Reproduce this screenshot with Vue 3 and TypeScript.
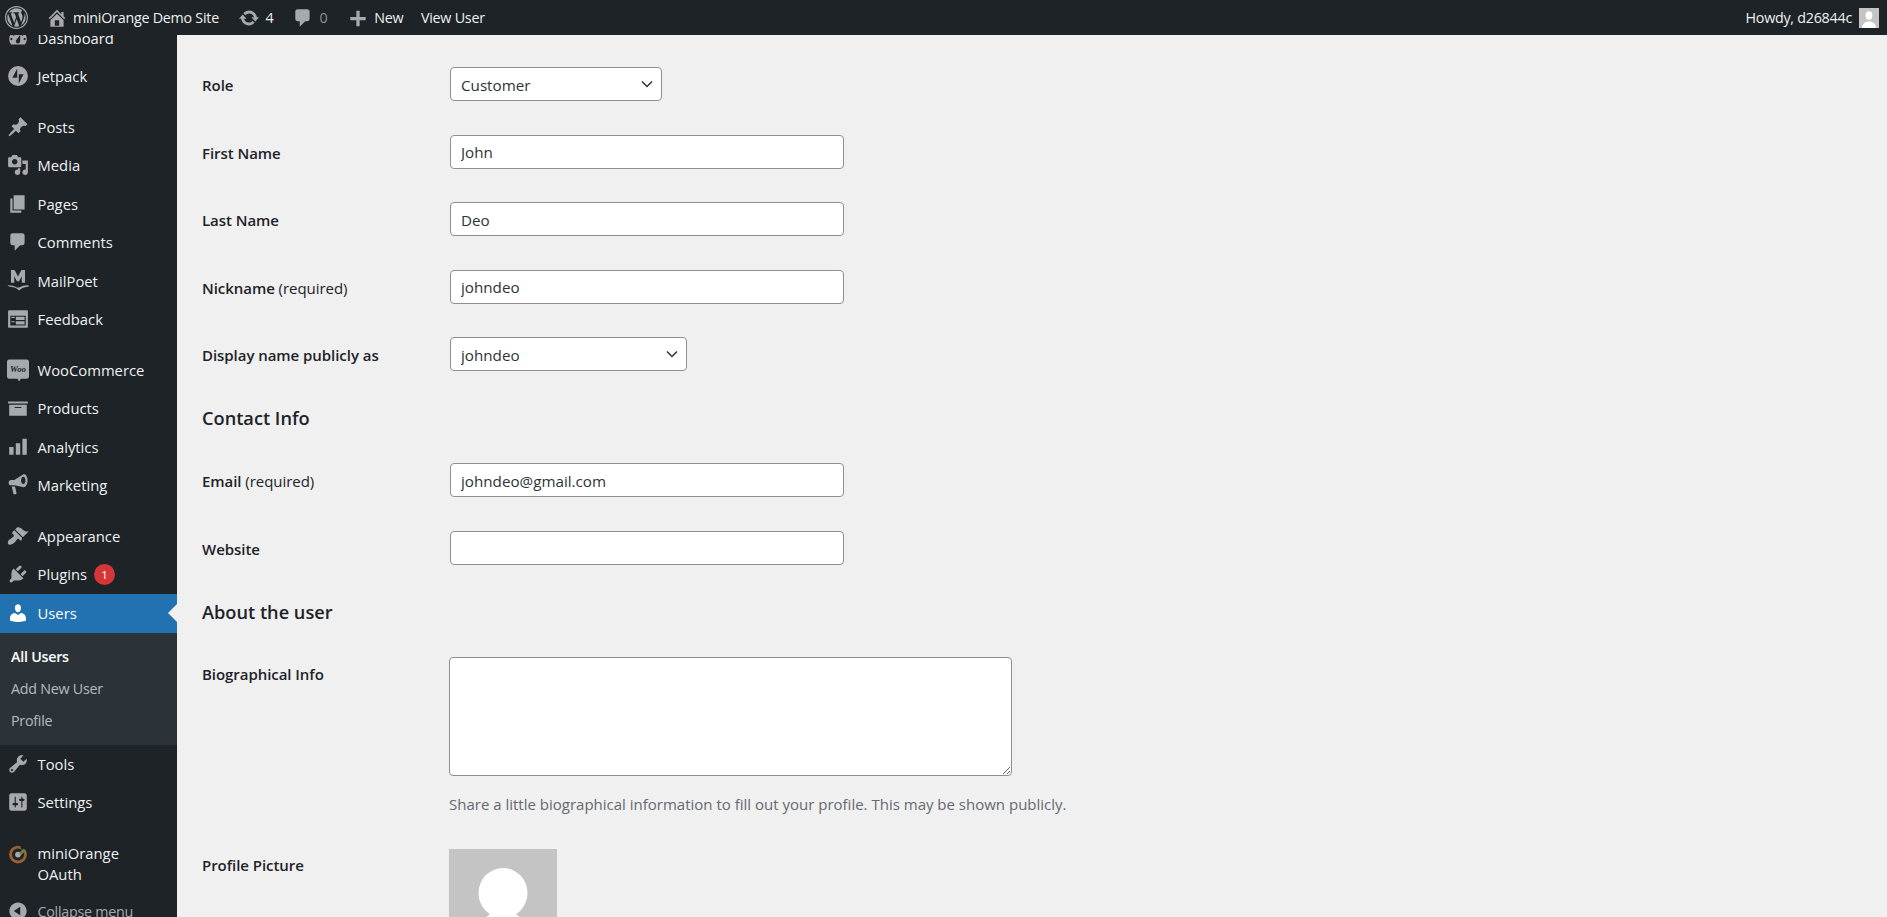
<script setup lang="ts">
interface MenuItem {
  label: string
  icon: string
  gapBefore?: boolean
  active?: boolean
  badge?: string
}

const paths: Record<string, string> = {
  dashboard: 'M3.76 16h12.48c1.1-1.37 1.76-3.11 1.76-5 0-4.42-3.58-8-8-8s-8 3.58-8 8c0 1.89.66 3.63 1.76 5zM10 4c.55 0 1 .45 1 1s-.45 1-1 1-1-.45-1-1 .45-1 1-1zM6 6c.55 0 1 .45 1 1s-.45 1-1 1-1-.45-1-1 .45-1 1-1zm8 0c.55 0 1 .45 1 1s-.45 1-1 1-1-.45-1-1 .45-1 1-1zm-5.37 5.55L12 7v6c0 1.1-.9 2-2 2s-2-.9-2-2c0-.57.24-1.08.63-1.45zM4 10c.55 0 1 .45 1 1s-.45 1-1 1-1-.45-1-1 .45-1 1-1zm12 0c.55 0 1 .45 1 1s-.45 1-1 1-1-.45-1-1 .45-1 1-1z',
  jetpack: 'M10 1a9 9 0 1 0 0 18 9 9 0 0 0 0-18zM9.3 11.6H4.9l4.4-8.5zM10.7 16.9V8.400h4.400z',
  posts: 'M10.44 3.02l1.82-1.82 6.36 6.35-1.83 1.82c-1.05-.68-2.48-.57-3.41.36l-.75.75c-.92.93-1.04 2.35-.35 3.41l-1.83 1.82-2.41-2.41-2.8 2.79c-.42.42-3.38 2.71-3.8 2.29s1.86-3.39 2.28-3.81l2.79-2.79L4.1 9.36l1.83-1.82c1.05.69 2.48.57 3.4-.36l.75-.75c.93-.92 1.05-2.35.36-3.41z',
  media: 'M13 11V4c0-.55-.45-1-1-1h-1.67L9 1H5L3.67 3H2c-.55 0-1 .45-1 1v7c0 .55.45 1 1 1h10c.55 0 1-.45 1-1zM7 4.500c1.380 0 2.500 1.120 2.500 2.500S8.380 9.500 7 9.500 4.500 8.380 4.500 7 5.620 4.500 7 4.500zM14 6h5v10.500c0 1.380-1.120 2.500-2.500 2.500S14 17.880 14 16.500s1.120-2.500 2.500-2.500c.17 0 .34.02.5.05V9h-3V6zm-4 8.050V13h2v3.500c0 1.380-1.120 2.500-2.500 2.500S7 17.880 7 16.500 8.120 14 9.500 14c.17 0 .34.02.5.05z',
  pages: 'M6 15V2h10v13H6zm-1 1h8v2H3V5h2v11z',
  comments: 'M5 2h9c1.100 0 2 .9 2 2v7c0 1.100-.9 2-2 2h-2l-5 5v-5H5c-1.100 0-2-.9-2-2V4c0-1.100.9-2 2-2z',
  mailpoet: 'M3.600 0h3.300L10 5.800 13.100 0h3.300v11.500h-3V5.600l-2.400 4.700H9L6.600 5.600v5.900h-3zM.4 13.800l1 .1c2.500.2 5.200.5 7.600 2.100h2c2.400-1.600 5.100-1.900 7.600-2.100l1-.1v1.500c-3 .3-5.500.6-7.500 2.500-.4.4-.6.500-1.100.5s-.7-.1-1.100-.5c-2-1.900-4.500-2.200-7.500-2.500z',
  feedback: 'M2 2h16c.55 0 1 .45 1 1v14c0 .55-.45 1-1 1H2c-.55 0-1-.45-1-1V3c0-.55.45-1 1-1zm15 14V7H3v9h14zM4 8v1h3V8H4zm4 0v3h8V8H8zm-4 4v1h3v-1H4zm4 0v3h8v-3H8z',
  woo: 'M2 .5h16c1.100 0 2 .9 2 2V16c0 1.100-.9 2-2 2h-5.500L11 20.500 9.500 18H2c-1.100 0-2-.9-2-2V2.500C0 1.400.9.500 2 .5z',
  products: 'M19 4v2H1V4h18zM2 7h16v10H2V7zm11 3V9H7v1h6z',
  analytics: 'M2 10h4v7H2zM8 6.500h4V17H8zM14 2.500h4V17h-4z',
  marketing: 'M18.700 5.800c0 3.200-1.500 5.900-3.400 6.200L6.700 10.300H3.600c-1.200 0-2.100-1-2.100-2.200v-.5c0-1.200.9-2.100 2.100-2.100h3.100L15.300.1c1.900.2 3.400 2.600 3.400 5.700zM14.800 2.600c-1.100 0-2 1.400-2 3.200s.9 3.200 2 3.200 2-1.400 2-3.200-.9-3.200-2-3.200zM4.300 11.300h3l1.400 6.300c.1.400-.2.800-.6.800H6.400c-.3 0-.6-.2-.6-.5z',
  appearance: 'M14.480 11.060L7.410 3.990l1.500-1.500c.5-.56 2.300-.47 3.510.32 1.210.8 1.430 1.280 2.910 2.100 1.180.64 2.450 1.260 4.450.85zm-.71.71L6.700 4.700 4.930 6.470c-.39.39-.39 1.020 0 1.410l1.060 1.060c.39.39.39 1.030 0 1.420-.6.6-1.430 1.110-2.210 1.690-.35.26-.7.53-1.010.84C1.430 13.230 0 16.140 1.300 17.450c1.300 1.300 4.210-.12 5.550-1.460.31-.31.58-.66.84-1.010.57-.78 1.080-1.610 1.690-2.210.39-.39 1.020-.39 1.410 0l1.060 1.060c.39.39 1.020.39 1.410 0z',
  plugins: 'M13.110 4.360L9.870 7.600 8 5.730l3.240-3.240c.35-.34 1.050-.2 1.560.32.52.51.66 1.210.31 1.550zm-8 1.770l.91-1.120 9.010 9.010-1.190.84c-.71.71-2.630 1.160-3.820 1.160H6.140L4.900 17.260c-.59.59-1.540.59-2.120 0-.59-.58-.59-1.530 0-2.120l1.240-1.240v-3.880c0-1.130.4-3.190 1.090-3.890zm7.260 3.970l3.240-3.240c.34-.35 1.040-.21 1.550.31.52.51.66 1.210.31 1.550l-3.240 3.250z',
  users: 'M10 9.250c-2.270 0-2.730-3.440-2.730-3.440C7 4.020 7.820 2 9.970 2c2.160 0 2.980 2.020 2.710 3.810 0 0-.41 3.440-2.680 3.440zm0 2.570L12.720 10c2.390 0 4.520 2.330 4.520 4.530v2.490s-3.650 1.130-7.240 1.130c-3.650 0-7.240-1.130-7.240-1.130v-2.490c0-2.250 1.940-4.480 4.470-4.480z',
  tools: 'M16.680 9.770c-1.340 1.340-3.300 1.670-4.950.99l-5.410 6.520c-.99.99-2.590.99-3.580 0s-.99-2.590 0-3.570l6.520-5.420c-.68-1.650-.35-3.610.99-4.950 1.280-1.280 3.120-1.620 4.720-1.060l-2.890 2.890 2.820 2.820 2.860-2.870c.53 1.580.18 3.390-1.080 4.650zM3.810 16.210c.4.39 1.040.39 1.430 0 .4-.4.4-1.040 0-1.430-.39-.4-1.030-.4-1.430 0-.39.39-.39 1.030 0 1.430z',
  settings: 'M18 16V4c0-1.100-.9-2-2-2H4c-1.100 0-2 .9-2 2v12c0 1.100.9 2 2 2h12c1.100 0 2-.9 2-2zM8 11h1c.55 0 1 .45 1 1s-.45 1-1 1H8v1.500c0 .28-.22.5-.5.5s-.5-.22-.5-.5V13H6c-.55 0-1-.45-1-1s.45-1 1-1h1V5.500c0-.28.22-.5.5-.5s.5.22.5.5V11zm5-2h-1c-.55 0-1-.45-1-1s.45-1 1-1h1V5.500c0-.28.22-.5.5-.5s.5.22.5.5V7h1c.55 0 1 .45 1 1s-.45 1-1 1h-1v5.500c0 .28-.22.5-.5.5s-.5-.22-.5-.5V9z',
  collapse: 'M10 2.160c4.330 0 7.840 3.510 7.840 7.840s-3.510 7.840-7.840 7.840S2.160 14.330 2.160 10 5.710 2.160 10 2.160zm2 11.720V6.120L6.180 9.970z',
  wp: 'M20 10c0-5.520-4.480-10-10-10S0 4.480 0 10s4.480 10 10 10 10-4.480 10-10zM10 1.010c4.970 0 8.990 4.020 8.990 8.990s-4.020 8.990-8.990 8.990S1.010 14.970 1.010 10 5.030 1.010 10 1.010zM8.010 14.820L4.960 6.610c.49-.03 1.050-.08 1.050-.08.43-.05.38-1.010-.06-.99 0 0-1.290.1-2.130.1-.15 0-.33 0-.52-.01 1.440-2.170 3.900-3.600 6.700-3.600 2.090 0 3.990.79 5.410 2.090-.6-.08-1.450.35-1.450 1.420 0 .66.38 1.220.79 1.880.31.54.5 1.220.5 2.210 0 1.340-1.270 4.480-1.270 4.480l-2.710-7.500c.48-.03.75-.16.75-.16.43-.04.38-1.100-.05-1.070 0 0-1.300.11-2.140.11-.78 0-2.110-.11-2.110-.11-.43-.03-.48 1.060-.05 1.070l.84.08 1.120 3.040zm6.020 2.150L16.640 10s.67-1.690.39-3.810c.63 1.140.94 2.420.94 3.810 0 2.960-1.560 5.580-3.940 6.970zM2.680 6.770L6.500 17.250c-2.670-1.300-4.470-4.080-4.470-7.250 0-1.160.2-2.230.65-3.230zm7.450 4.530l2.290 6.250c-.76.27-1.570.42-2.420.42-.72 0-1.410-.11-2.060-.3z',
  home: 'M16 8.500l1.530 1.530-1.060 1.060L10 4.620l-6.470 6.470-1.060-1.060L10 2.500l4 4v-2h2v4zm-6-2.460l6 5.990V18H4v-5.970zM12 17v-5H8v5h4z',
  update: 'M10.200 3.280c3.530 0 6.430 2.610 6.920 6h2.080l-3.500 4-3.500-4h2.320c-.45-1.970-2.210-3.450-4.320-3.450-1.450 0-2.730.71-3.540 1.780L4.950 5.660C6.230 4.200 8.110 3.280 10.200 3.280zm-.4 13.440c-3.520 0-6.430-2.610-6.920-6H.8l3.500-4c1.170 1.330 2.330 2.670 3.500 4H5.480c.45 1.970 2.210 3.450 4.320 3.450 1.450 0 2.730-.71 3.540-1.780l1.710 1.950c-1.280 1.460-3.150 2.380-5.250 2.380z',
  plus: 'M17 9v3h-5.500v5.500h-3V12H3V9h5.500V3.500h3V9z',
}

const menu: MenuItem[] = [
  { label: 'Dashboard', icon: 'dashboard' },
  { label: 'Jetpack', icon: 'jetpack' },
  { label: 'Posts', icon: 'posts', gapBefore: true },
  { label: 'Media', icon: 'media' },
  { label: 'Pages', icon: 'pages' },
  { label: 'Comments', icon: 'comments' },
  { label: 'MailPoet', icon: 'mailpoet' },
  { label: 'Feedback', icon: 'feedback' },
  { label: 'WooCommerce', icon: 'woo', gapBefore: true },
  { label: 'Products', icon: 'products' },
  { label: 'Analytics', icon: 'analytics' },
  { label: 'Marketing', icon: 'marketing' },
  { label: 'Appearance', icon: 'appearance', gapBefore: true },
  { label: 'Plugins', icon: 'plugins', badge: '1' },
  { label: 'Users', icon: 'users', active: true },
]
const menuAfter: MenuItem[] = [
  { label: 'Tools', icon: 'tools' },
  { label: 'Settings', icon: 'settings' },
]
</script>

<template>
  <div class="page">
    <header class="adminbar">
      <div class="bar-left">
        <svg class="bar-wp" viewBox="0 0 20 20"><path :d="paths.wp" /></svg>
        <div class="bar-item site">
          <svg class="bar-icon" viewBox="0 0 20 20"><path :d="paths.home" /></svg>
          <span>miniOrange Demo Site</span>
        </div>
        <div class="bar-item updates">
          <svg class="bar-icon" viewBox="0 0 20 20"><path :d="paths.update" /></svg>
          <span>4</span>
        </div>
        <div class="bar-item bubbles">
          <svg class="bar-icon" viewBox="0 0 20 20"><path :d="paths.comments" /></svg>
          <span class="dim">0</span>
        </div>
        <div class="bar-item newitem">
          <svg class="bar-icon" viewBox="0 0 20 20"><path :d="paths.plus" /></svg>
          <span>New</span>
        </div>
        <div class="bar-item viewuser"><span>View User</span></div>
      </div>
      <div class="bar-right">
        <span>Howdy, d26844c</span>
        <svg class="bar-avatar" viewBox="0 0 20 20">
          <rect width="20" height="20" fill="#c4c4c4" />
          <ellipse cx="10" cy="7.500" rx="3.400" ry="4.200" fill="#fff" />
          <path d="M3 20c.3-4.500 3.500-6.500 7-6.500s6.700 2 7 6.500z" fill="#fff" />
        </svg>
      </div>
    </header>

    <div class="body-row">
      <aside class="sidebar">
        <nav class="menu">
          <div
            v-for="item in menu"
            :key="item.label"
            class="menu-item"
            :class="{ gap: item.gapBefore, active: item.active }"
          >
            <svg class="menu-icon" viewBox="0 0 20 20">
              <path :d="paths[item.icon]" />
              <text v-if="item.icon === 'woo'" x="10" y="11.500" class="woo-text">Woo</text>
            </svg>
            <span>{{ item.label }}</span>
            <span v-if="item.badge" class="badge">{{ item.badge }}</span>
            <i v-if="item.active" class="arrow"></i>
          </div>
          <div class="submenu">
            <div class="sub-item current">All Users</div>
            <div class="sub-item">Add New User</div>
            <div class="sub-item">Profile</div>
          </div>
          <div v-for="item in menuAfter" :key="item.label" class="menu-item">
            <svg class="menu-icon" viewBox="0 0 20 20"><path :d="paths[item.icon]" /></svg>
            <span>{{ item.label }}</span>
          </div>
          <div class="menu-item two-line gap">
            <svg class="menu-icon oauth" viewBox="0 0 20 20">
              <circle cx="10" cy="10.500" r="6.800" fill="none" stroke="#9a6232" stroke-width="2.600" />
              <circle cx="10" cy="10.500" r="2.600" fill="#a7aaad" />
              <path d="M12 3.500l4-1.500 1 3-3 2z" fill="#1d2327" />
              <path d="M11 9l4-4 .5 1.500 1.500.3-4 4z" fill="#5f8a3c" />
            </svg>
            <span>miniOrange<br />OAuth</span>
          </div>
          <div class="menu-item collapse">
            <svg class="menu-icon" viewBox="0 0 20 20"><path :d="paths.collapse" /></svg>
            <span>Collapse menu</span>
          </div>
        </nav>
      </aside>

      <main class="content">
        <div class="row">
          <label class="label">Role</label>
          <div class="select-wrap role">
            <select class="field"><option>Customer</option></select>
            <svg class="chev" viewBox="0 0 16 16"><path d="M3 5.500l5 5 5-5" /></svg>
          </div>
        </div>
        <div class="row">
          <label class="label">First Name</label>
          <input class="field text" value="John" />
        </div>
        <div class="row">
          <label class="label">Last Name</label>
          <input class="field text" value="Deo" />
        </div>
        <div class="row">
          <label class="label">Nickname <span class="req">(required)</span></label>
          <input class="field text" value="johndeo" />
        </div>
        <div class="row">
          <label class="label">Display name publicly as</label>
          <div class="select-wrap display">
            <select class="field"><option>johndeo</option></select>
            <svg class="chev" viewBox="0 0 16 16"><path d="M3 5.500l5 5 5-5" /></svg>
          </div>
        </div>

        <h2 class="section">Contact Info</h2>
        <div class="row">
          <label class="label">Email <span class="req">(required)</span></label>
          <input class="field text" value="johndeo@gmail.com" />
        </div>
        <div class="row">
          <label class="label">Website</label>
          <input class="field text" value="" />
        </div>

        <h2 class="section">About the user</h2>
        <div class="row bio">
          <label class="label">Biographical Info</label>
          <div class="control">
            <textarea class="bio-box"></textarea>
            <p class="desc">Share a little biographical information to fill out your profile. This may be shown publicly.</p>
          </div>
        </div>
        <div class="row picture">
          <label class="label">Profile Picture</label>
          <svg class="pic" viewBox="0 0 108 108">
            <rect width="108" height="108" fill="#c4c4c4" />
            <ellipse cx="54" cy="44" rx="24.500" ry="25" fill="#fff" />
            <path d="M42 64c-3 4-10 6-14 12-6 9-7 22-7 32h66c0-10-1-23-7-32-4-6-11-8-14-12z" fill="#fff" />
          </svg>
        </div>
      </main>
    </div>
  </div>
</template>

<style>
html, body { margin: 0; height: 100%; overflow: hidden; background: #f0f0f1; }
</style>

<style scoped>
.page {
  height: 917px;
  display: flex;
  flex-direction: column;
  overflow: hidden;
  font-family: "Open Sans", "Noto Sans", sans-serif;
  font-size: 14.3px;
  color: #1d2327;
  background: #f0f0f1;
}

.adminbar {
  flex: none;
  height: 35px;
  background: #1d2327;
  color: #f0f0f1;
  display: flex;
  align-items: center;
  justify-content: space-between;
  padding: 0 8px 0 5px;
  letter-spacing: -0.25px;
}
.bar-left, .bar-right, .bar-item { display: flex; align-items: center; }
.bar-wp { width: 23px; height: 23px; fill: #a7aaad; }
.bar-icon { width: 22px; height: 22px; fill: #a7aaad; margin-right: 5px; }
.site { margin-left: 18px; }
.updates { margin-left: 19.500px; }
.bubbles { margin-left: 19px; }
.newitem { margin-left: 20px; }
.viewuser { margin-left: 17.500px; }
.dim { color: #8c8f94; }
.bar-right { gap: 7px; }
.bar-avatar { width: 20px; height: 20px; }

.body-row { flex: 1; min-height: 0; display: flex; }

.sidebar {
  flex: none;
  width: 177px;
  background: #1d2327;
  overflow: hidden;
  color: #f0f0f1;
  font-size: 14.800px;
}
.menu { margin-top: -16.600px; }
.menu-item {
  position: relative;
  display: flex;
  align-items: center;
  height: 38.400px;
  padding-left: 7px;
}
.menu-item.gap { margin-top: 12.600px; }
.menu-item.active { background: #2271b1; color: #fff; top: 0.600px; }
.menu-item.active .menu-icon { fill: #fff; }
.menu-icon {
  flex: none;
  width: 22px;
  height: 22px;
  margin-right: 8.500px;
  fill: #a7aaad;
}
.woo-text {
  font-family: "Liberation Serif", serif;
  font-style: italic;
  font-size: 8px;
  font-weight: 700;
  text-anchor: middle;
  fill: #1d2327;
}
.badge {
  display: flex;
  align-items: center;
  justify-content: center;
  width: 21px;
  height: 21px;
  margin-left: 7px;
  border-radius: 50%;
  background: #d63638;
  color: #fff;
  font-size: 11.500px;
}
.arrow {
  position: absolute;
  right: 0;
  top: 50%;
  margin-top: -9px;
  border: 9px solid transparent;
  border-left-width: 0;
  border-right-color: #f0f0f1;
}
.submenu {
  background: #2c3338;
  margin-top: 0.600px;
  padding: 8.500px 0 6.500px;
  height: 112px;
  box-sizing: border-box;
  font-size: 14.300px;
  letter-spacing: -0.25px;
}
.sub-item {
  height: 32px;
  line-height: 32px;
  padding-left: 11px;
  color: rgba(240, 246, 252, 0.7);
}
.sub-item.current { color: #fff; font-weight: 600; }
.menu-item.two-line { height: 48px; line-height: 21px; margin-top: 18.600px; }
.two-line .menu-icon { margin-top: -20px; }
.collapse { color: #a7aaad; margin-top: 4px; font-size: 14.300px; letter-spacing: -0.25px; }

.content {
  flex: 1;
  min-width: 0;
  padding: 15.300px 0 0 25px;
  overflow: hidden;
  font-size: 15px;
}
.row {
  display: flex;
  align-items: center;
  padding: 16.750px 0;
}
.label {
  flex: none;
  width: 248px;
  padding-top: 2px;
  font-weight: 600;
  color: #1d2327;
  letter-spacing: -0.05px;
}
.req { font-weight: 400; }
.bio, .picture { align-items: flex-start; }
.bio .label { padding-top: 7px; }
.field {
  display: block;
  box-sizing: border-box;
  height: 34px;
  border: 1px solid #8c8f94;
  border-radius: 4px;
  background: #fff;
  padding: 1px 10px 0;
  font: inherit;
  font-size: 15.200px;
  color: #2c3338;
  outline: none;
}
.text { width: 394px; }
.select-wrap { position: relative; }
.select-wrap .field { appearance: none; width: 100%; }
.role { width: 212px; }
.display { width: 237px; }
.chev {
  position: absolute;
  right: 7px;
  top: 9px;
  width: 16px;
  height: 16px;
  fill: none;
  stroke: #2c3338;
  stroke-width: 1.500;
  pointer-events: none;
}
.section {
  margin: 18px 0 16.800px;
  font-size: 18.200px;
  line-height: 24px;
  font-weight: 600;
  color: #1d2327;
}
.control { display: flex; flex-direction: column; }
.bio-box {
  display: block;
  box-sizing: border-box;
  width: 563px;
  height: 119px;
  border: 1px solid #8c8f94;
  border-radius: 4px;
  background: #fff;
  outline: none;
  margin-left: -1px;
}
.desc {
  margin: 16.500px 0 1px -1px;
  line-height: 22px;
  color: #646970;
}
.picture .label { padding-top: 6px; }
.pic { flex: none; width: 108px; height: 108px; margin-left: -1px; }
</style>
